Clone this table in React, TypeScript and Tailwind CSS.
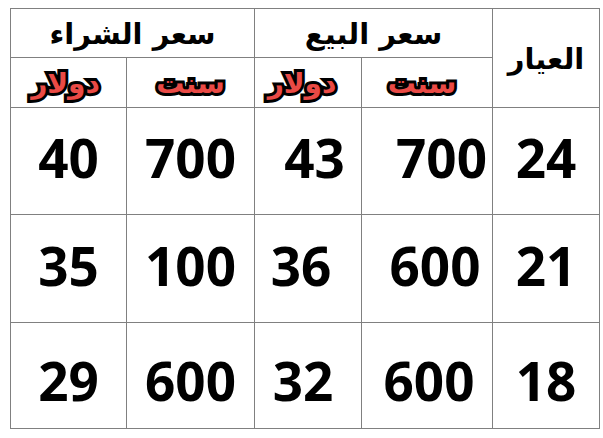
import React from "react";

const num = "font-['Open_Sans',sans-serif] font-[680] text-[53px] leading-none text-black";
const arHead = "font-['DejaVu_Sans',sans-serif] font-bold text-[29px] leading-none text-black";
const red =
  "font-['DejaVu_Sans',sans-serif] font-bold text-[28px] leading-none text-[#ea4a45] [-webkit-text-stroke:6px_#000] [paint-order:stroke_fill]";

function Cell({ children, className = "" }: { children?: React.ReactNode; className?: string }) {
  return <div className={`bg-white flex items-center justify-center ${className}`}>{children}</div>;
}

export default function App() {
  const rows: { vals: string[]; pad: string[]; v: string }[] = [
    { vals: ["40", "700", "43", "700", "24"], pad: ["", "", "pl-[13px]", "pl-[29px]", ""], v: "pb-[8px]" },
    { vals: ["35", "100", "36", "600", "21"], pad: ["", "", "pr-[14px]", "pl-[16px]", ""], v: "pb-[6px]" },
    { vals: ["29", "600", "32", "600", "18"], pad: ["", "", "pr-[10px]", "pl-[4px]", ""], v: "pt-[10px]" },
  ];
  return (
    <div className="w-[603px] h-[438px] bg-white pt-[8px] pl-[10px]">
      <div className="grid w-[590px] bg-[#808080] p-px gap-px grid-cols-[115px_127px_106px_130px_106px] grid-rows-[48px_49px_106px_107px_105px]">
        <Cell className="col-span-2 pt-[2px]">
          <span dir="rtl" className={arHead}>سعر الشراء</span>
        </Cell>
        <Cell className="col-span-2 pt-[2px]">
          <span dir="rtl" className={arHead}>سعر البيع</span>
        </Cell>
        <Cell className="row-span-2 pt-[2px]">
          <span dir="rtl" className={arHead}>العيار</span>
        </Cell>
        <Cell className="pr-[6px] pt-[2px]">
          <span dir="rtl" className={red}>دولار</span>
        </Cell>
        <Cell className="pt-[2px]">
          <span dir="rtl" className={red}>سنت</span>
        </Cell>
        <Cell className="pr-[12px] pt-[2px]">
          <span dir="rtl" className={red}>دولار</span>
        </Cell>
        <Cell className="pr-[10px] pt-[2px]">
          <span dir="rtl" className={red}>سنت</span>
        </Cell>
        {rows.map((r, i) =>
          r.vals.map((v, j) => (
            <Cell key={`${i}-${j}`} className={`${r.pad[j]} ${r.v}`}>
              <span className={num}>{v}</span>
            </Cell>
          ))
        )}
      </div>
    </div>
  );
}
